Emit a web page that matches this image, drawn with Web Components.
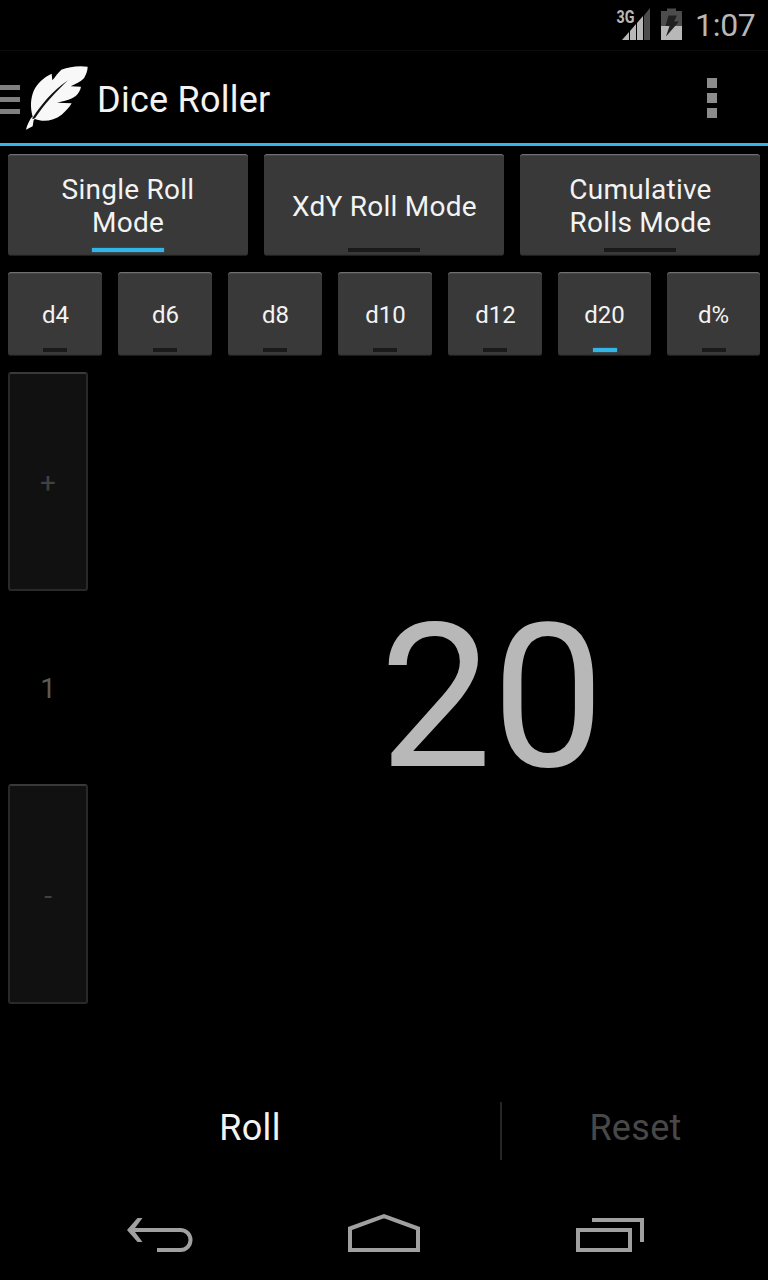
<!DOCTYPE html>
<html lang="en">
<head>
<meta charset="utf-8">
<title>Dice Roller</title>
<style>
html, body { margin: 0; background: #000; }
body { width: 768px; height: 1280px; overflow: hidden; font-family: Roboto, sans-serif; color: #f3f3f3; }
</style>
</head>
<body>
<dice-app></dice-app>
<script>
const define = (name, html) => {
  const t = document.createElement('template');
  t.innerHTML = html;
  customElements.define(name, class extends HTMLElement {
    constructor() {
      super();
      this.attachShadow({ mode: 'open' }).appendChild(t.content.cloneNode(true));
    }
  });
};

define('status-bar', `
<style>
:host { display: flex; justify-content: flex-end; height: 50px; box-sizing: border-box; padding-right: 13px; color: #b8b8b8; }
svg { display: block; flex: none; }
.clock { width: 60px; height: 50px; margin-left: 1px; font-size: 32px; line-height: 51px; letter-spacing: -.3px; white-space: nowrap; text-align: right; }
</style>
<svg width="80" height="50" viewBox="614 0 80 50">
  <text x="616.5" y="23" font-size="18" font-weight="700" textLength="18" lengthAdjust="spacingAndGlyphs" fill="#b8b8b8">3G</text>
  <path d="M622 40L629 32V40ZM630 31L636 24V40H630ZM637 23L643 16V40H637Z" fill="#b8b8b8"/>
  <path d="M644 15.500L650 8V40H644Z" fill="#4c4c4c"/>
  <path d="M661 11H667V8.500H676V11H682V26H661Z" fill="#4c4c4c"/>
  <path d="M661 26H682V40H661Z" fill="#b8b8b8"/>
  <path d="M668.500 15.500H677L674 21.500H679L666 36.500L669.500 26H665.500Z" fill="#202020"/>
</svg>
<span class="clock">1:07</span>`);

define('action-bar', `
<style>
:host { display: flex; align-items: flex-start; height: 96px; box-sizing: border-box; border-top: 1px solid #0c0c0c; border-bottom: 3px solid #33b5e5; }
svg { display: block; flex: none; }
.drawer { margin-top: 34px; }
.feather { margin: 14px 0 0 6px; }
h1 { margin: 0 0 0 8px; flex: 1; font-weight: 400; font-size: 36px; line-height: 42px; padding-top: 28px; letter-spacing: .25px; white-space: nowrap; }
.more { margin: 27px 51px 0 0; }
</style>
<svg class="drawer" width="20" height="30" fill="#808080"><path d="M0 0H20V5H0ZM0 12H20V17H0ZM0 24H20V29H0Z"/></svg>
<svg class="feather" width="63" height="66" viewBox="78 45 189 198">
  <path fill="#f8f8f8" d="M78 239C81 226 86 216 93 204L98 200C90 170 92 145 101 123C112 98 132 82 155 71L157 91C166 80 174 68 184 59C208 50 236 46 263 50C263 62 258 74 252 85C241 96 227 102 212 109L243 110C241 121 235 130 228 137C211 150 190 153 171 158L215 160C207 173 197 184 185 194C160 213 130 217 105 207L101 210L98 229Z"/>
  <path fill="#111" d="M99 202C121 168 156 123 204 91C169 124 132 164 105 205L99 207L96 205Z"/>
</svg>
<h1><slot></slot></h1>
<svg class="more" width="10" height="40" fill="#8c8c8c"><path d="M0 0H10V10H0ZM0 15H10V25H0ZM0 30H10V40H0Z"/></svg>`);

define('toggle-button', `
<style>
:host { display: flex; flex-direction: column; align-items: center; box-sizing: border-box; height: 102px; background: #393939;
  border-top: 1px solid #707070; border-bottom: 1px solid #1e1e1e; box-shadow: inset 0 1px #474747, inset 0 -1px #333; border-radius: 3px; font-size: 28px; line-height: 33px; --bar: #1a1a1a; --bar-w: 72px; }
:host([small]) { height: 84px; font-size: 24px; line-height: 28px; --bar-w: 24px; }
:host([on]) { --bar: #33b5e5; }
.label { flex: 1; display: flex; align-items: center; text-align: center; letter-spacing: .25px; padding: 9px 0 0 var(--lead, 1px); white-space: nowrap; }
:host([small]) .label { letter-spacing: 0; }
i { flex: none; width: var(--bar-w); height: 4px; margin-bottom: 3px; background: var(--bar); }
:host([on]) i { box-shadow: 0 0 2px #33b5e580; }
</style>
<div class="label"><span><slot></slot></span></div><i></i>`);

define('step-button', `
<style>
:host { display: flex; align-items: center; justify-content: center; box-sizing: border-box; width: 80px; padding-top: 2px; background: #111;
  border: 2px solid #292929; border-top-color: #393939; border-radius: 3px; font-size: 28px; color: #414141; }
</style><slot></slot>`);

define('count-stepper', `
<style>
:host { display: grid; grid-template-rows: 219px 193px 220px; width: 80px; }
.n { display: flex; align-items: center; justify-content: center; padding-top: 2px; font-size: 28px; color: #5b5b5b; }
</style>
<step-button>+</step-button><div class="n"><slot></slot></div><step-button>-</step-button>`);

define('roll-result', `
<style>
:host { flex: 1; display: flex; justify-content: center; align-items: center; font-size: 200px; line-height: 234px; color: #b8b8b8; }
</style><slot></slot>`);

define('roll-actions', `
<style>
:host { display: grid; grid-template-columns: 500px 2px 266px; height: 58px; font-size: 36px; line-height: 52px; text-align: center; letter-spacing: .3px; }
i { background: #262626; }
.reset { color: #484848; padding-left: 1px; }
</style>
<div><slot name="roll"></slot></div><i></i><div class="reset"><slot name="reset"></slot></div>`);

define('nav-bar', `
<style>
:host { display: grid; grid-template-columns: 66px 72px 68px; column-gap: 155px; padding: 0 0 0 127px; align-items: start; }
svg { display: block; }
</style>
<svg width="68" height="40" fill="none" stroke="#a0a0a0" stroke-width="4"><path d="M4 18H53.500A10 10 0 0 1 53.500 38H30"/><path fill="#a0a0a0" stroke="none" d="M0 18L10.500 6H15.500L6.500 18L15.500 30H10.500Z"/></svg>
<svg width="72" height="40" fill="none" stroke="#a0a0a0" stroke-width="4"><path d="M2 16.500L36 4.200L70 16.500V38H2Z"/></svg>
<svg style="margin-left:1px" width="68" height="40" fill="none" stroke="#a0a0a0" stroke-width="4"><path d="M2 18H54V38H2ZM16 8H66V30"/></svg>`);

define('dice-app', `
<style>
:host { display: block; width: 768px; height: 1280px; background: #000; }
.modes { display: grid; grid-template-columns: repeat(3, 240px); gap: 16px; padding: 8px 8px 0; }
.modes toggle-button:first-child { --lead: 0px; }
.dice { display: grid; grid-template-columns: repeat(5, 94px) 93px 93px; gap: 16px; padding: 16px 8px 0; }
.dice toggle-button:nth-child(n+6) { --lead: 0px; }
.main { display: flex; padding: 16px 0 0 8px; height: 632px; }
roll-result { padding: 19px 0 0 128px; }
roll-actions { margin-top: 98px; }
nav-bar { margin-top: 52px; }
</style>
<status-bar></status-bar>
<action-bar>Dice Roller</action-bar>
<div class="modes">
  <toggle-button on>Single Roll<br>Mode</toggle-button>
  <toggle-button>XdY Roll Mode</toggle-button>
  <toggle-button>Cumulative<br>Rolls Mode</toggle-button>
</div>
<div class="dice">
  <toggle-button small>d4</toggle-button><toggle-button small>d6</toggle-button><toggle-button small>d8</toggle-button>
  <toggle-button small>d10</toggle-button><toggle-button small>d12</toggle-button><toggle-button small on>d20</toggle-button>
  <toggle-button small>d%</toggle-button>
</div>
<div class="main"><count-stepper>1</count-stepper><roll-result>20</roll-result></div>
<roll-actions><span slot="roll">Roll</span><span slot="reset">Reset</span></roll-actions>
<nav-bar></nav-bar>`);
</script>
</body>
</html>
